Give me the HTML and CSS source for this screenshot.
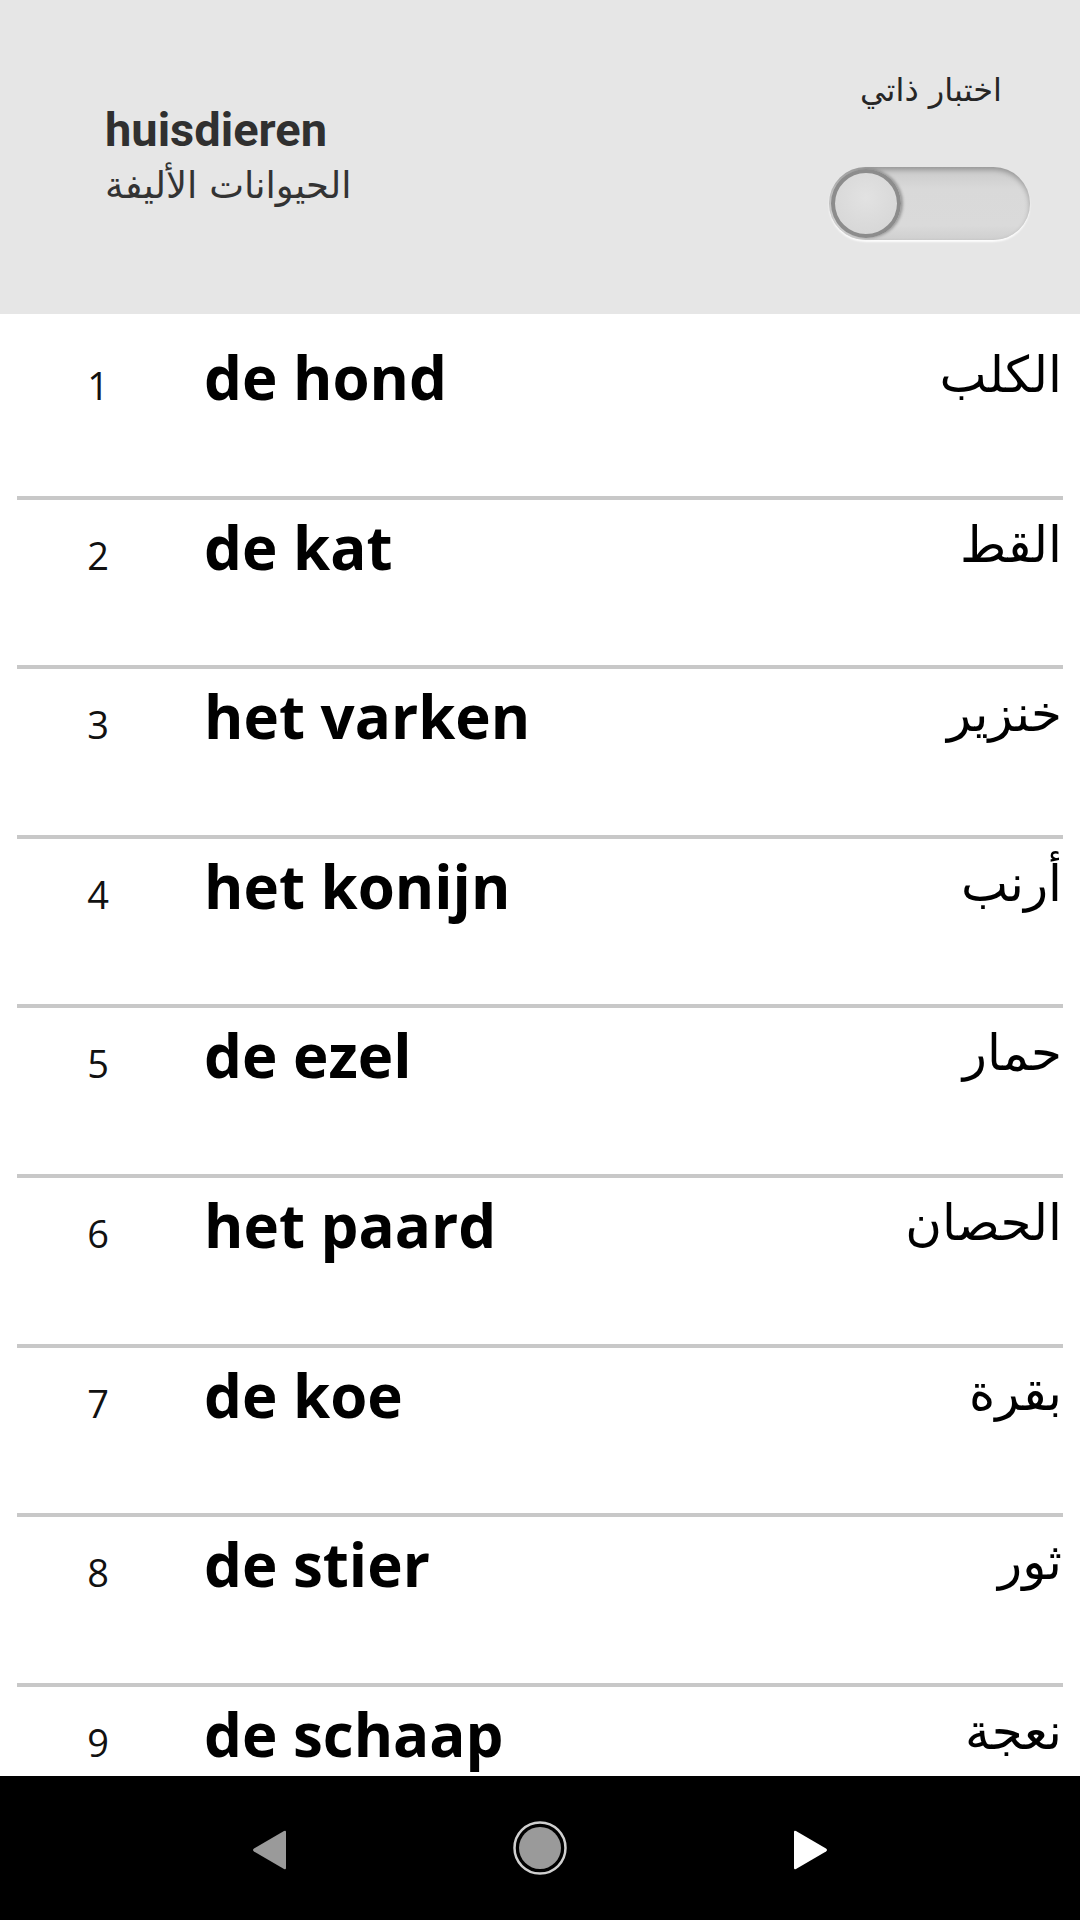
FILE: index.html
```html
<!DOCTYPE html>
<html lang="nl">
<head>
    <meta charset="UTF-8">
    <meta name="viewport" content="width=device-width, initial-scale=1.0">
    <title>huisdieren</title>
    <link rel="stylesheet" href="styles.css">
</head>
<body>
    <header class="topbar">
        <div class="title">
            <h1>huisdieren</h1>
            <p class="title-ar" dir="rtl">الحيوانات الأليفة</p>
        </div>
        <div class="quiz">
            <span class="quiz-label" dir="rtl">اختبار ذاتي</span>
            <div class="switch"><div class="knob"></div></div>
        </div>
    </header>

    <main class="list">
        <div class="row"><span class="num">1</span><span class="nl">de hond</span><span class="ar" dir="rtl">الكلب</span></div>
        <div class="row"><span class="num">2</span><span class="nl">de kat</span><span class="ar" dir="rtl">القط</span></div>
        <div class="row"><span class="num">3</span><span class="nl">het varken</span><span class="ar" dir="rtl">خنزير</span></div>
        <div class="row"><span class="num">4</span><span class="nl">het konijn</span><span class="ar" dir="rtl">أرنب</span></div>
        <div class="row"><span class="num">5</span><span class="nl">de ezel</span><span class="ar" dir="rtl">حمار</span></div>
        <div class="row"><span class="num">6</span><span class="nl">het paard</span><span class="ar" dir="rtl">الحصان</span></div>
        <div class="row"><span class="num">7</span><span class="nl">de koe</span><span class="ar" dir="rtl">بقرة</span></div>
        <div class="row"><span class="num">8</span><span class="nl">de stier</span><span class="ar" dir="rtl">ثور</span></div>
        <div class="row"><span class="num">9</span><span class="nl">de schaap</span><span class="ar" dir="rtl">نعجة</span></div>
    </main>

    <nav class="navbar">
        <svg class="nav-icon" width="38" height="40" viewBox="0 0 38 40">
            <path d="M35 2 L35 38 Q35 40 33 39 L3 21.5 Q1 20 3 18.5 L33 1 Q35 0 35 2 Z" fill="#9a9a9a"/>
        </svg>
        <svg class="nav-icon" width="54" height="54" viewBox="0 0 54 54">
            <circle cx="27" cy="27" r="25.5" fill="none" stroke="#cfcfcf" stroke-width="2.5"/>
            <circle cx="27" cy="27" r="21" fill="#9a9a9a"/>
        </svg>
        <svg class="nav-icon" width="38" height="40" viewBox="0 0 38 40">
            <path d="M3 2 L3 38 Q3 40 5 39 L35 21.5 Q37 20 35 18.5 L5 1 Q3 0 3 2 Z" fill="#ffffff"/>
        </svg>
    </nav>
</body>
</html>
```

FILE: styles.css
```css
*{
    box-sizing: border-box;
}
body{
    margin: 0;
    width: 1080px;
    height: 1920px;
    overflow: hidden;
    display: flex;
    flex-direction: column;
    background: #ffffff;
    font-family: "Open Sans", "DejaVu Sans", sans-serif;
}
.topbar{
    height: 314px;
    flex-shrink: 0;
    background: #e6e6e6;
    display: flex;
    justify-content: space-between;
    padding: 0 50px 0 105px;
}
.title{
    padding-top: 102px;
}
.title h1{
    margin: 0;
    font-family: Roboto, "Liberation Sans", sans-serif;
    font-weight: bold;
    font-size: 47px;
    line-height: 56px;
    color: #303030;
}
.title-ar{
    margin: 4px 0 0 0;
    font-family: "DejaVu Sans", sans-serif;
    font-size: 37px;
    line-height: 48px;
    color: #333333;
    text-align: left;
}
.quiz{
    display: flex;
    flex-direction: column;
    align-items: flex-end;
    padding-top: 68px;
}
.quiz-label{
    font-family: "DejaVu Sans", sans-serif;
    font-size: 32px;
    line-height: 44px;
    color: #262626;
    margin-right: 28px;
}
.switch{
    margin-top: 55px;
    width: 201px;
    height: 73px;
    border-radius: 37px;
    background: linear-gradient(#c9c9c9, #d9d9d9 30%, #dadada 80%, #cfcfcf);
    box-shadow: inset 0 3px 5px rgba(0,0,0,0.25), 0 2px 2px rgba(255,255,255,0.9);
    padding: 2px;
}
.knob{
    width: 70px;
    height: 69px;
    border-radius: 50%;
    border: 4px solid #8c8c8c;
    background: radial-gradient(circle at 50% 40%, #e2e2e2, #d4d4d4);
    box-shadow: 2px 0 3px rgba(0,0,0,0.3);
}
.list{
    flex: 1;
    overflow: hidden;
    padding: 16px 17px 0 17px;
}
.row{
    height: 169.6px;
    border-bottom: 4px solid #c8c8c8;
    display: flex;
    align-items: baseline;
    padding-top: 17px;
    padding-right: 1px;
}
.num{
    width: 162px;
    text-align: center;
    font-size: 38px;
    line-height: 60px;
    color: #111111;
}
.nl{
    margin-left: 25px;
    flex: 1;
    font-weight: bold;
    font-size: 60px;
    line-height: 60px;
    color: #000000;
}
.ar{
    font-family: "DejaVu Sans", sans-serif;
    font-size: 50px;
    line-height: 60px;
    color: #000000;
    position: relative;
    top: -8px;
}
.navbar{
    height: 144px;
    flex-shrink: 0;
    background: #000000;
    display: flex;
    align-items: center;
    justify-content: center;
}
.nav-icon{
    display: block;
}
.navbar .nav-icon:nth-child(1){
    margin-right: 224px;
    margin-top: 3px;
}
.navbar .nav-icon:nth-child(3){
    margin-left: 224px;
    margin-top: 3px;
}
```
